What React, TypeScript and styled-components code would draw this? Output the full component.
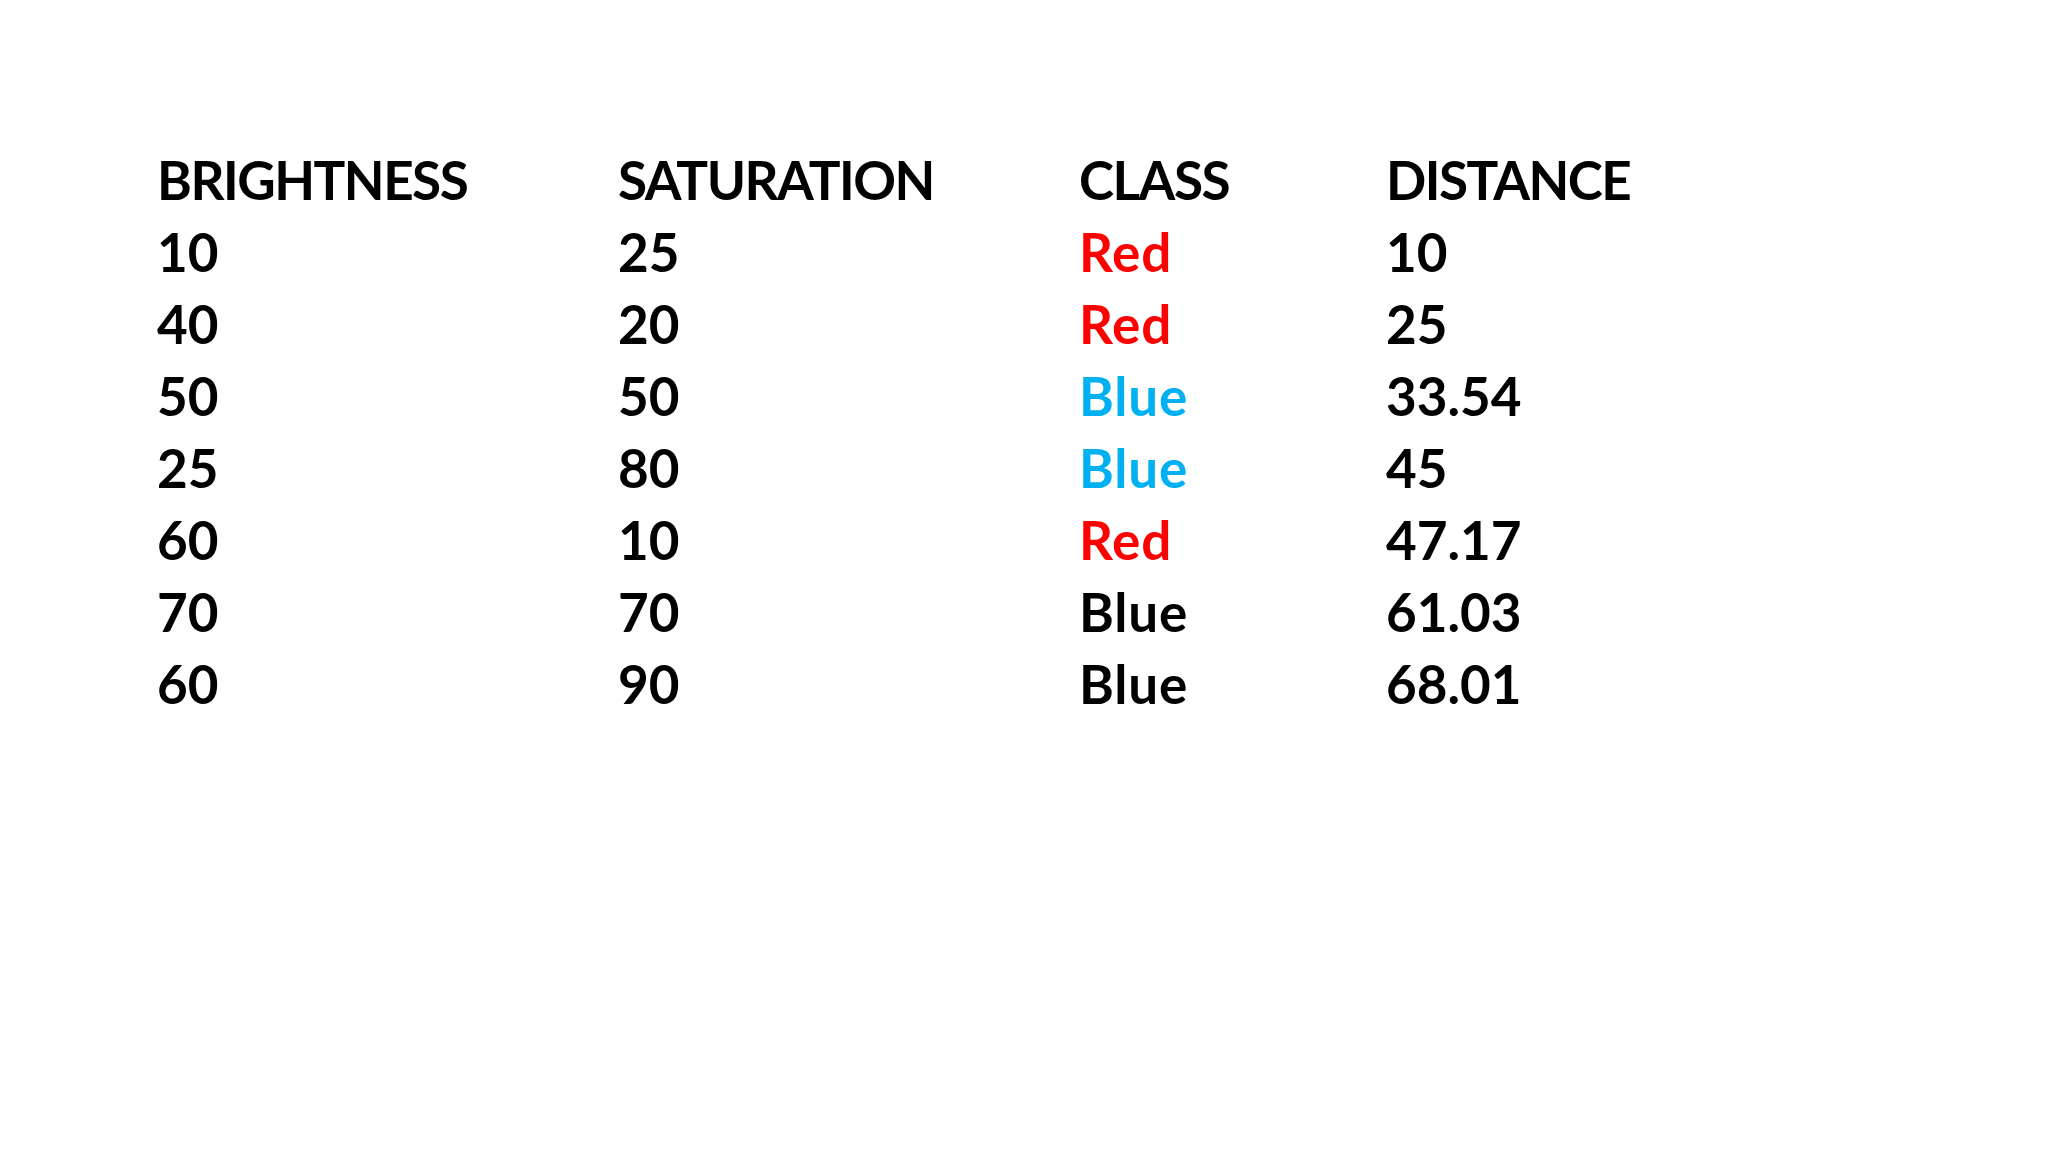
import React from "react";
import styled, { createGlobalStyle } from "styled-components";

const Global = createGlobalStyle`
  html, body { margin: 0; padding: 0; background: #ffffff; }
  body { width: 2048px; height: 1152px; overflow: hidden; }
`;

const Slide = styled.div`
  width: 2048px;
  height: 1152px;
  box-sizing: border-box;
  padding: 144px 0 0 157px;
  background: #ffffff;
  font-family: Lato, "Open Sans", sans-serif;
  font-weight: 700;
`;

const Table = styled.div`
  display: grid;
  grid-template-columns: 461px 461px 307px auto;
  grid-auto-rows: 72px;
`;

type Tone = "black" | "red" | "blue";
type Kind = "header" | "label" | "number";

const toneColor: Record<Tone, string> = {
  black: "#000000",
  red: "#ff0000",
  blue: "#00b0f0",
};

const spacing: Record<Kind, string> = {
  header: "-1.5px",
  label: "0.8px",
  number: "0px",
};

const Cell = styled.div<{ $tone?: Tone; $kind?: Kind }>`
  font-size: 53px;
  line-height: 72px;
  letter-spacing: ${(p) => spacing[p.$kind ?? "number"]};
  white-space: nowrap;
  color: ${(p) => toneColor[p.$tone ?? "black"]};
`;

const headers = ["BRIGHTNESS", "SATURATION", "CLASS", "DISTANCE"];

const rows: { b: string; s: string; c: string; tone: Tone; d: string }[] = [
  { b: "10", s: "25", c: "Red", tone: "red", d: "10" },
  { b: "40", s: "20", c: "Red", tone: "red", d: "25" },
  { b: "50", s: "50", c: "Blue", tone: "blue", d: "33.54" },
  { b: "25", s: "80", c: "Blue", tone: "blue", d: "45" },
  { b: "60", s: "10", c: "Red", tone: "red", d: "47.17" },
  { b: "70", s: "70", c: "Blue", tone: "black", d: "61.03" },
  { b: "60", s: "90", c: "Blue", tone: "black", d: "68.01" },
];

export default function App() {
  return (
    <>
      <Global />
      <Slide>
        <Table>
          {headers.map((h) => (
            <Cell key={h} $kind="header">
              {h}
            </Cell>
          ))}
          {rows.map((r, i) => (
            <React.Fragment key={i}>
              <Cell>{r.b}</Cell>
              <Cell>{r.s}</Cell>
              <Cell $kind="label" $tone={r.tone}>
                {r.c}
              </Cell>
              <Cell>{r.d}</Cell>
            </React.Fragment>
          ))}
        </Table>
      </Slide>
    </>
  );
}
